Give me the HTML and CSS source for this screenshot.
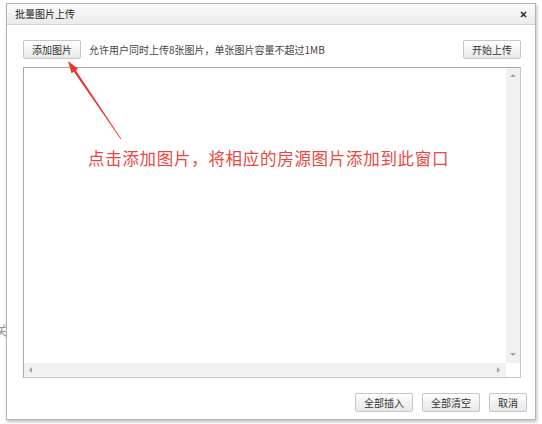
FILE: index.html
```html
<!DOCTYPE html>
<html lang="zh">
<head>
<meta charset="utf-8">
<title>批量图片上传</title>
<link rel="stylesheet" href="styles.css">
</head>
<body>
<div class="bg-char">关</div>
<div class="dialog">
  <div class="titlebar">
    <span class="title">批量图片上传</span>
    <svg class="close" width="7" height="7" viewBox="0 0 7 7"><path d="M1 1L6 6M6 1L1 6" stroke="#333" stroke-width="1.7" fill="none"/></svg>
  </div>
  <div class="toolbar">
    <button class="btn">添加图片</button>
    <span class="hint">允许用户同时上传8张图片，单张图片容量不超过1MB</span>
    <button class="btn btn-right">开始上传</button>
  </div>
  <div class="box">
    <div class="content">
      <p class="note">点击添加图片，将相应的房源图片添加到此窗口</p>
    </div>
    <div class="vscroll">
      <span class="tri tri-up"></span>
      <span class="tri tri-down"></span>
    </div>
    <div class="hscroll">
      <span class="tri tri-left"></span>
      <span class="tri tri-right"></span>
    </div>
    <div class="corner"></div>
  </div>
  <div class="footer">
    <button class="btn">全部插入</button>
    <button class="btn">全部清空</button>
    <button class="btn">取消</button>
  </div>
</div>
<svg class="arrow" width="542" height="424" viewBox="0 0 542 424">
  <polygon points="68,61 78.1,68.7 75.8,70.3 121.3,138.8 120.7,139.2 73.8,71.7 71.5,73.3" fill="#e8392f"/>
</svg>
</body>
</html>
```
FILE: styles.css
```css
html, body {
  margin: 0;
  padding: 0;
  background: #fff;
}
body {
  position: relative;
  width: 542px;
  height: 424px;
  overflow: hidden;
  font-family: "Noto Sans CJK SC", "DejaVu Sans", sans-serif;
  color: #333;
}
.bg-char {
  position: absolute;
  left: -5px;
  top: 322px;
  font-size: 13px;
  line-height: 16px;
  color: #999;
}
.dialog {
  position: relative;
  margin: 3px 0 0 6px;
  width: 528px;
  height: 415px;
  border: 1px solid #b4b4b4;
  background: #fff;
  box-shadow: 1px 2px 3px rgba(0, 0, 0, 0.25);
  display: flex;
  flex-direction: column;
}
.titlebar {
  height: 20px;
  border-bottom: 1px solid #d2d2d2;
  background: linear-gradient(#fbfbfb, #ebebeb);
  display: flex;
  align-items: center;
  justify-content: space-between;
  padding: 0 8px 0 8px;
  font-size: 10px;
  color: #222;
}
.title {
  line-height: 20px;
}
.close {
  display: block;
}
.toolbar {
  margin-top: 15px;
  height: 19px;
  padding: 0 14px 0 16px;
  display: flex;
  align-items: center;
}
.btn {
  height: 19px;
  padding: 0 8px;
  margin: 0;
  border: 1px solid #c6c6c6;
  border-radius: 2px;
  background: linear-gradient(#fefefe, #e8e8e8);
  font-family: "Noto Sans CJK SC", "DejaVu Sans", sans-serif;
  font-size: 10px;
  line-height: 17px;
  color: #333;
}
.hint {
  margin-left: 8px;
  font-size: 10px;
  color: #444;
}
.btn-right {
  margin-left: auto;
}
.box {
  margin: 8px 14px 0 16px;
  height: 309px;
  border: 1px solid #a8a8a8;
  border-right-color: #c8c8c8;
  border-bottom-color: #c8c8c8;
  display: grid;
  grid-template-columns: 1fr 14px;
  grid-template-rows: 1fr 14px;
}
.content {
  padding: 80px 0 0 64px;
}
.note {
  margin: 0;
  font-size: 16.5px;
  line-height: 20px;
  color: #e9473f;
  letter-spacing: 0.7px;
}
.vscroll {
  background: #f1f1f1;
  display: flex;
  flex-direction: column;
  justify-content: space-between;
  align-items: center;
  padding: 6px 0 7px;
}
.hscroll {
  background: #f1f1f1;
  display: flex;
  justify-content: space-between;
  align-items: center;
  padding: 0 6px 0 5px;
}
.corner {
  background: #fff;
}
.tri {
  display: block;
  width: 0;
  height: 0;
  border-style: solid;
  border-color: transparent;
}
.tri-up {
  border-width: 0 3px 3px 3px;
  border-bottom-color: #a4a4a4;
}
.tri-down {
  border-width: 3px 3px 0 3px;
  border-top-color: #a4a4a4;
}
.tri-left {
  border-width: 3px 3px 3px 0;
  border-right-color: #a4a4a4;
}
.tri-right {
  border-width: 3px 0 3px 3px;
  border-left-color: #a4a4a4;
}
.footer {
  margin-top: 15px;
  height: 19px;
  padding: 0 8px;
  display: flex;
  justify-content: flex-end;
  gap: 9px;
}
.arrow {
  position: absolute;
  left: 0;
  top: 0;
  pointer-events: none;
}
```
